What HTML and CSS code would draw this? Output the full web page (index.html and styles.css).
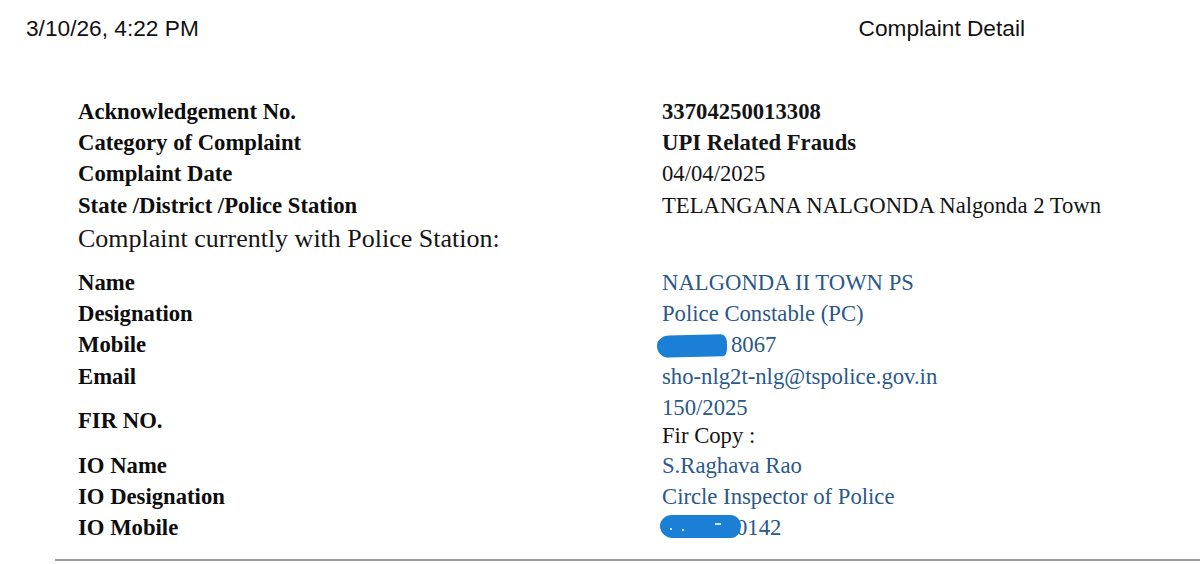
FILE: index.html
```html
<!DOCTYPE html>
<html>
<head>
<meta charset="utf-8">
<title>Complaint Detail</title>
<link rel="stylesheet" href="styles.css">
</head>
<body>
<header class="print-header">
  <span class="ph-date">3/10/26, 4:22 PM</span>
  <span class="ph-title">Complaint Detail</span>
</header>
<main class="detail">
  <div class="label">Acknowledgement No.</div>
  <div class="value strong">33704250013308</div>
  <div class="label">Category of Complaint</div>
  <div class="value strong">UPI Related Frauds</div>
  <div class="label">Complaint Date</div>
  <div class="value">04/04/2025</div>
  <div class="label">State /District /Police Station</div>
  <div class="value">TELANGANA NALGONDA Nalgonda 2 Town</div>

  <div class="section-head">Complaint currently with Police Station:</div>

  <div class="label">Name</div>
  <div class="value blue">NALGONDA II TOWN PS</div>
  <div class="label">Designation</div>
  <div class="value blue">Police Constable (PC)</div>
  <div class="label">Mobile</div>
  <div class="value blue"><span class="redact r1"></span>8067</div>
  <div class="label">Email</div>
  <div class="value blue">sho-nlg2t-nlg@tspolice.gov.in</div>
  <div class="label mid">FIR NO.</div>
  <div class="value">
    <div class="blue">150/2025</div>
    <div class="fir-copy">Fir Copy :</div>
  </div>
  <div class="label">IO Name</div>
  <div class="value blue">S.Raghava Rao</div>
  <div class="label">IO Designation</div>
  <div class="value blue">Circle Inspector of Police</div>
  <div class="label">IO Mobile</div>
  <div class="value blue"><span class="redact r2"><i class="dot d1"></i><i class="dot d2"></i><i class="dot d3"></i></span>0142</div>
</main>
<div class="rule"></div>
</body>
</html>
```
FILE: styles.css
```css
html, body {
  margin: 0;
  padding: 0;
  background: #ffffff;
}
body {
  width: 1200px;
  height: 564px;
  overflow: hidden;
  color: #111111;
}
.print-header {
  display: flex;
  justify-content: space-between;
  padding: 15px 175px 0 26px;
  font-family: "Liberation Sans", Arial, sans-serif;
  font-size: 22.7px;
  line-height: 26px;
  color: #111111;
}
.detail {
  display: grid;
  grid-template-columns: 584px 1fr;
  margin: 54.6px 0 0 78px;
  font-family: "Liberation Serif", "Times New Roman", serif;
  font-size: 22.7px;
  line-height: 31.4px;
}
.label {
  font-weight: bold;
  color: #0d0d0d;
}
.label.mid {
  align-self: center;
}
.value {
  color: #141414;
  white-space: nowrap;
}
.strong {
  font-weight: bold;
}
.blue {
  color: #2a5889;
}
.fir-copy {
  color: #141414;
  line-height: 23.5px;
  margin-bottom: 2.5px;
}
.section-head {
  grid-column: 1 / -1;
  font-size: 26px;
  line-height: 34px;
  margin-top: 1px;
  margin-bottom: 10.4px;
  color: #141414;
}
.redact {
  display: inline-block;
  position: relative;
  background: #1a7fd5;
}
.r1 {
  width: 70px;
  height: 22px;
  margin-left: -5px;
  margin-right: 4px;
  vertical-align: -5px;
  border-radius: 12px 6px 4px 11px / 10px 8px 8px 12px;
  transform: rotate(-1.5deg);
}
.r2 {
  width: 81px;
  height: 23px;
  margin-left: -2px;
  margin-right: -5px;
  vertical-align: -3px;
  border-radius: 12px 11px 10px 13px / 11px 11px 12px 12px;
}
.dot {
  position: absolute;
  width: 2px;
  height: 2px;
  background: #cfe4f8;
}
.d1 { left: 10px; top: 13px; }
.d2 { left: 22px; top: 14px; }
.d3 { left: 55px; top: 8px; width: 6px; height: 2px; }
.rule {
  margin: 15.5px 0 0 55px;
  height: 2px;
  background: #9a9a9a;
}
```
